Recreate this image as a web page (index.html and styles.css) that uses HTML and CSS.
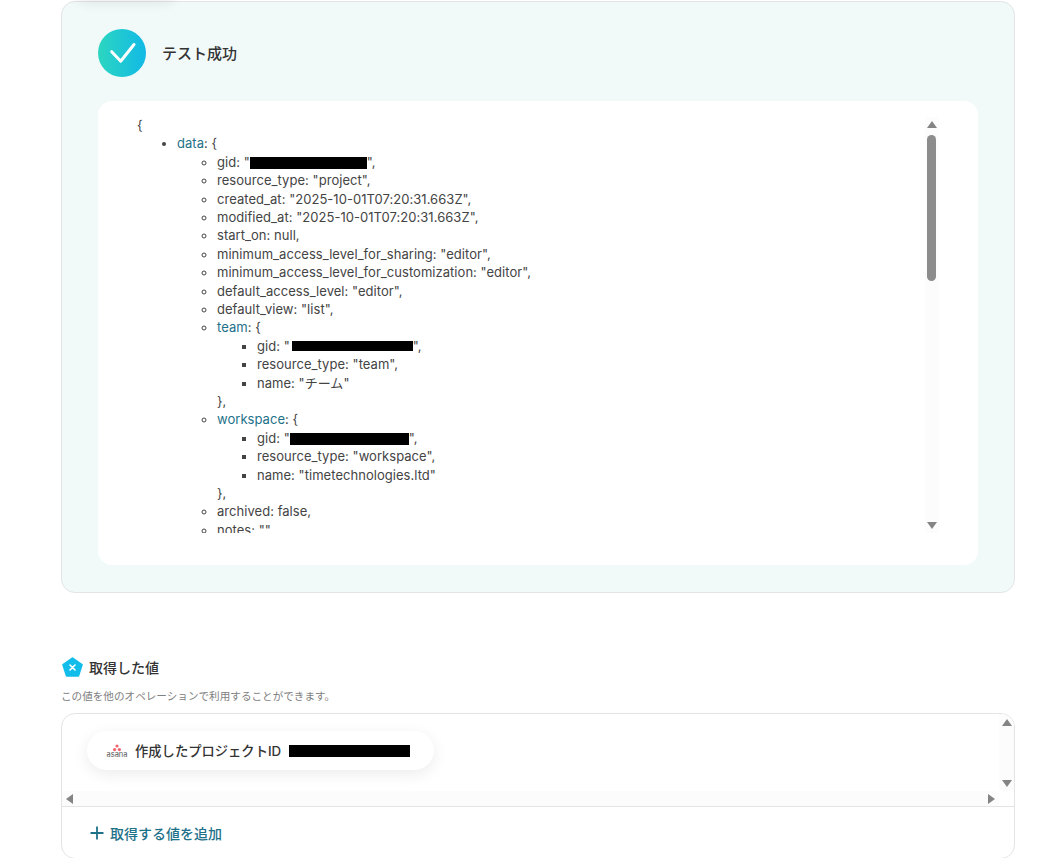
FILE: index.html
```html
<!DOCTYPE html>
<html lang="ja">
<head>
<meta charset="utf-8">
<title>テスト成功</title>
<link rel="stylesheet" href="styles.css">
</head>
<body>
<main class="page">
  <section class="result-panel">
    <header class="result-head">
      <span class="check-badge">
        <svg viewBox="0 0 48 48" width="48" height="48"><defs><linearGradient id="cg" x1="0" y1="0" x2="1" y2="0"><stop offset="0" stop-color="#2cd6c0"/><stop offset="1" stop-color="#12b9e6"/></linearGradient></defs><circle cx="24" cy="24" r="24" fill="url(#cg)"/><path d="M13.7 22.7 L22.7 32.2 L36 15.5" fill="none" stroke="#fff" stroke-width="3" stroke-linecap="round" stroke-linejoin="round"/></svg>
      </span>
      <h2 class="result-title">テスト成功</h2>
    </header>
    <div class="json-card">
      <div class="json-view">
        <div class="json-text">
          <div class="json-line root-line">{</div>
          <ul class="lvl1">
            <li><span class="key">data</span>: {
              <ul class="lvl2">
                <li>gid: "<span class="redact r1"></span>",</li>
                <li>resource_type: "project",</li>
                <li>created_at: "2025-10-01T07:20:31.663Z",</li>
                <li>modified_at: "2025-10-01T07:20:31.663Z",</li>
                <li>start_on: null,</li>
                <li>minimum_access_level_for_sharing: "editor",</li>
                <li>minimum_access_level_for_customization: "editor",</li>
                <li>default_access_level: "editor",</li>
                <li>default_view: "list",</li>
                <li><span class="key">team</span>: {
                  <ul class="lvl3">
                    <li>gid: "<span class="redact r2"></span>",</li>
                    <li>resource_type: "team",</li>
                    <li>name: "チーム"</li>
                  </ul>
                  <div class="json-line">},</div>
                </li>
                <li><span class="key">workspace</span>: {
                  <ul class="lvl3">
                    <li>gid: "<span class="redact r3"></span>",</li>
                    <li>resource_type: "workspace",</li>
                    <li>name: "timetechnologies.ltd"</li>
                  </ul>
                  <div class="json-line">},</div>
                </li>
                <li>archived: false,</li>
                <li>notes: ""</li>
              </ul>
            </li>
          </ul>
        </div>
        <div class="v-scroll">
          <span class="arrow up"></span>
          <span class="thumb"></span>
          <span class="arrow down"></span>
        </div>
      </div>
    </div>
  </section>

  <section class="values">
    <h3 class="values-title">
      <svg class="values-icon" viewBox="0 0 21 20" width="21" height="20"><path d="M10.5 1.2 19.8 7.8 16.3 18.8 4.7 18.8 1.2 7.8Z" fill="#12bdea" stroke="#12bdea" stroke-width="2" stroke-linejoin="round"/><path d="M8 8 13 13M13 8 8 13" stroke="#fff" stroke-width="1.6" stroke-linecap="round"/></svg>
      取得した値
    </h3>
    <p class="values-note">この値を他のオペレーションで利用することができます。</p>
    <div class="values-box">
      <div class="values-scroll">
        <div class="values-area">
          <div class="chip">
            <span class="asana">
              <svg viewBox="0 0 20 8" width="20" height="8"><circle cx="10" cy="2" r="1.6" fill="#f0646c"/><circle cx="7.6" cy="5.6" r="1.6" fill="#f0646c"/><circle cx="12.4" cy="5.6" r="1.6" fill="#f0646c"/></svg>
              <span class="asana-word">asana</span>
            </span>
            <span class="chip-label">作成したプロジェクトID</span>
            <span class="redact chip-redact"></span>
          </div>
        </div>
        <div class="v-scroll small">
          <span class="arrow up"></span>
          <span class="arrow down"></span>
        </div>
        <div class="h-scroll">
          <span class="arrow left"></span>
          <span class="arrow right"></span>
        </div>
      </div>
      <div class="add-row">
        <svg viewBox="0 0 14 14" width="14" height="14"><path d="M7 .5V13.5M.5 7H13.5" stroke="#1d7189" stroke-width="1.8"/></svg>
        <span>取得する値を追加</span>
      </div>
    </div>
  </section>
</main>
</body>
</html>
```

FILE: styles.css
```css
* { box-sizing: border-box; }
html, body { margin: 0; padding: 0; background: #fff; }
body {
  font-family: Inter, "Noto Sans CJK JP", sans-serif;
  color: #333;
  height: 858px;
  overflow: hidden;
}
.page { padding: 1px 26px 0 61px; }

.result-panel {
  position: relative;
  height: 592px;
  padding: 27px 36px 27px;
  background: #f1faf9;
  border: 1px solid #e2e4e6;
  border-radius: 14px;
}
.result-panel::before {
  content: "";
  position: absolute;
  left: 12px;
  top: -32px;
  width: 104px;
  height: 30px;
  border-radius: 20px;
  box-shadow: 0 4px 12px rgba(0, 0, 0, .07);
}
.result-head { display: flex; align-items: center; gap: 16px; height: 48px; }
.check-badge { display: block; width: 48px; height: 48px; }
.check-badge svg { display: block; }
.result-title { margin: -1px 0 0; font-size: 15px; font-weight: 500; color: #333; }

.json-card {
  margin-top: 24px;
  height: 464px;
  padding: 16px 39px 32px 39px;
  background: #fff;
  border-radius: 14px;
}
.json-view { display: flex; height: 416px; }
.json-text {
  flex: 1;
  overflow: hidden;
  font-size: 13px;
  line-height: 18.4px;
  color: #444;
  letter-spacing: .04px;
}
.json-line { height: 18.4px; }
.root-line { margin-top: -1px; }
.json-text ul { margin: 0; padding-left: 40px; }
.lvl1 { list-style: disc; }
.lvl2 { list-style: circle; }
.lvl3 { list-style: square; }
.key { color: #1d7189; }
.redact { display: inline-block; background: #000; vertical-align: -2px; height: 12px; }
.r1 { width: 117px; }
.r2 { width: 121px; height: 10px; margin-left: 2px; vertical-align: 0; }
.r3 { width: 119px; }

.v-scroll {
  position: relative;
  flex: none;
  width: 14px;
  background: #fcfcfc;
  display: flex;
  flex-direction: column;
  align-items: center;
  justify-content: space-between;
  padding: 4px 0;
}
.thumb {
  position: absolute;
  top: 18px;
  left: 2px;
  width: 9px;
  height: 146px;
  background: #8c8c8c;
  border-radius: 5px;
}
.arrow { display: block; width: 0; height: 0; border: solid transparent; }
.arrow.up { border-width: 0 5px 7px; border-bottom-color: #848484; }
.arrow.down { border-width: 7px 5px 0; border-top-color: #848484; }
.arrow.left { border-width: 5px 7px 5px 0; border-right-color: #848484; }
.arrow.right { border-width: 5px 0 5px 7px; border-left-color: #848484; }

.values { margin-top: 63px; }
.values-title {
  display: flex;
  align-items: center;
  gap: 6px;
  margin: 0 0 0 1px;
  height: 22px;
  font-size: 14px;
  font-weight: 500;
  color: #333;
}
.values-icon { flex: none; }
.values-note { margin: 11px 0 0; font-size: 10.6px; line-height: 15px; color: #808080; }
.values-box {
  margin-top: 9px;
  height: 146px;
  border: 1px solid #e2e4e6;
  border-radius: 14px;
  overflow: hidden;
}
.values-scroll {
  display: grid;
  grid-template-columns: 1fr 15px;
  grid-template-rows: 77px 15px;
  height: 93px;
  border-bottom: 1px solid #e2e4e6;
}
.values-area { padding: 17px 25px; }
.chip {
  display: inline-flex;
  align-items: center;
  width: 347px;
  height: 39px;
  padding-left: 20px;
  background: #fff;
  border-radius: 20px;
  box-shadow: 0 4px 16px rgba(0, 0, 0, .08);
}
.asana { display: flex; flex-direction: column; align-items: center; width: 20px; }
.asana svg { display: block; }
.asana-word { font-size: 7.5px; line-height: 6px; color: #555; }
.chip-label { margin-left: 8px; font-size: 13.3px; font-weight: 500; color: #333; white-space: nowrap; }
.chip-redact { width: 121px; height: 12px; margin-left: 8px; }
.v-scroll.small { width: 15px; height: 77px; padding: 5px 0 4px; }
.h-scroll {
  grid-column: 1 / 2;
  display: flex;
  align-items: center;
  justify-content: space-between;
  padding: 0 4px 0 4px;
  background: #fcfcfc;
}
.add-row {
  display: flex;
  align-items: center;
  gap: 6px;
  padding-left: 28px;
  height: 52px;
  font-size: 14px;
  font-weight: 500;
  color: #1d7189;
}
```
